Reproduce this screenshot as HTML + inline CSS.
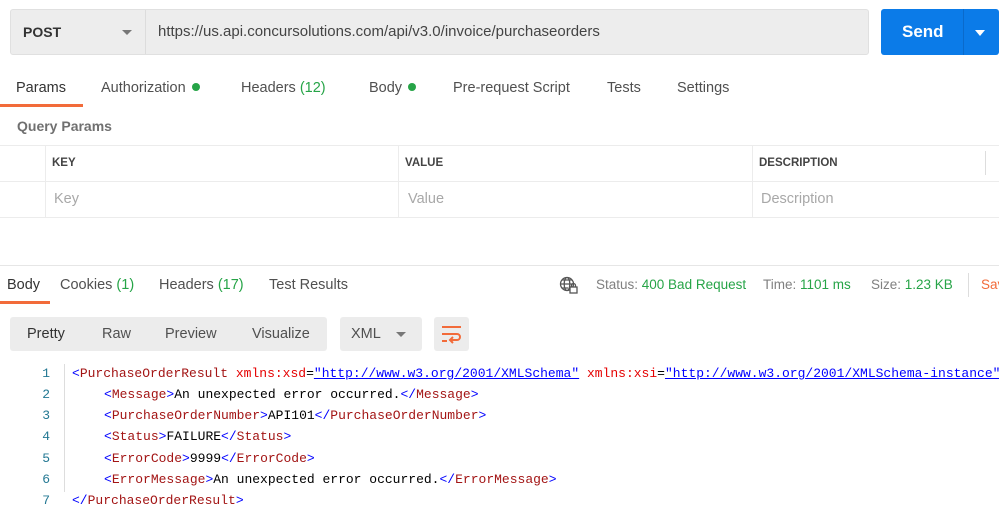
<!DOCTYPE html>
<html><head><meta charset="utf-8"><style>
*{margin:0;padding:0;box-sizing:border-box}
body{width:999px;height:532px;overflow:hidden;background:#fff;font-family:"Liberation Sans",sans-serif;font-size:14.5px;color:#505050;position:relative}
.a{position:absolute;white-space:nowrap}
.g{color:#26a447}
.dot{display:inline-block;width:8px;height:8px;border-radius:50%;background:#26a447;margin-left:6px;vertical-align:1px}
.code{font-family:"Liberation Mono",monospace;font-size:13px;color:#000}
.t{color:#0000ff}.n{color:#a31515}.at{color:#e50000}.s{color:#0000ff;text-decoration:underline}
.ln{position:absolute;left:30px;width:20px;text-align:right;font-family:"Liberation Mono",monospace;font-size:13px;color:#237893}
</style></head><body>
<div class="a" style="left:10px;top:9px;width:859px;height:46px;background:#ededed;border:1px solid #e0e0e0;border-radius:3px"></div>
<div class="a" style="left:145px;top:10px;width:1px;height:44px;background:#dcdcdc"></div>
<div class="a" style="left:23px;top:24px;color:#333;font-weight:bold;font-size:14px">POST</div>
<div class="a" style="left:122px;top:30px;border-left:5px solid transparent;border-right:5px solid transparent;border-top:5px solid #777"></div>
<div class="a" style="left:158px;top:23px;color:#444;font-size:15px">https://us.api.concursolutions.com/api/v3.0/invoice/purchaseorders</div>
<div class="a" style="left:881px;top:9px;width:118px;height:46px;background:#0b7be8;border-radius:3px"></div>
<div class="a" style="left:963px;top:9px;width:1px;height:46px;background:#0a6acb"></div>
<div class="a" style="left:902px;top:22px;color:#fff;font-weight:bold;font-size:17px">Send</div>
<div class="a" style="left:975px;top:30px;border-left:5px solid transparent;border-right:5px solid transparent;border-top:6px solid #fff"></div>

<div class="a" style="left:16px;top:80px;color:#333">Params</div>
<div class="a" style="left:0;top:104px;width:83px;height:3px;background:#f26b3a"></div>
<div class="a" style="left:101px;top:80px">Authorization<span class="dot"></span></div>
<div class="a" style="left:241px;top:80px">Headers <span class="g">(12)</span></div>
<div class="a" style="left:369px;top:80px">Body<span class="dot"></span></div>
<div class="a" style="left:453px;top:80px">Pre-request Script</div>
<div class="a" style="left:607px;top:80px">Tests</div>
<div class="a" style="left:677px;top:80px">Settings</div>
<div class="a" style="left:17px;top:118px;color:#707070;font-weight:bold;font-size:14px">Query Params</div>

<div class="a" style="left:0;top:145px;width:999px;height:1px;background:#ececec"></div>
<div class="a" style="left:0;top:181px;width:999px;height:1px;background:#ececec"></div>
<div class="a" style="left:0;top:217px;width:999px;height:1px;background:#ececec"></div>
<div class="a" style="left:45px;top:145px;width:1px;height:72px;background:#ececec"></div>
<div class="a" style="left:398px;top:145px;width:1px;height:72px;background:#ececec"></div>
<div class="a" style="left:752px;top:145px;width:1px;height:72px;background:#ececec"></div>
<div class="a" style="left:985px;top:151px;width:1px;height:24px;background:#ddd"></div>
<div class="a" style="left:52px;top:157px;font-size:11.5px;font-weight:bold;color:#444">KEY</div>
<div class="a" style="left:405px;top:157px;font-size:11.5px;font-weight:bold;color:#444">VALUE</div>
<div class="a" style="left:759px;top:157px;font-size:11.5px;font-weight:bold;color:#444">DESCRIPTION</div>
<div class="a" style="left:54px;top:191px;color:#a8a8a8">Key</div>
<div class="a" style="left:408px;top:191px;color:#a8a8a8">Value</div>
<div class="a" style="left:761px;top:191px;color:#a8a8a8">Description</div>

<div class="a" style="left:0;top:265px;width:999px;height:1px;background:#e6e6e6"></div>
<div class="a" style="left:7px;top:277px;color:#333">Body</div>
<div class="a" style="left:0;top:301px;width:50px;height:3px;background:#f26b3a"></div>
<div class="a" style="left:60px;top:277px">Cookies <span class="g">(1)</span></div>
<div class="a" style="left:159px;top:277px">Headers <span class="g">(17)</span></div>
<div class="a" style="left:269px;top:277px">Test Results</div>
<svg class="a" style="left:559px;top:276px" width="20" height="18" viewBox="0 0 20 18" fill="none" stroke="#555" stroke-width="1.3"><circle cx="8" cy="8" r="6.5"/><ellipse cx="8" cy="8" rx="2.8" ry="6.5"/><path d="M1.5 8h13M3 4h10M3 12h6"/><rect x="11" y="11" width="7" height="6" fill="#fff"/><path d="M12.5 11v-1.5a2 2 0 0 1 4 0V11"/></svg>
<div class="a" style="left:596px;top:277px;font-size:13.5px;color:#808080">Status: <span class="g">400 Bad Request</span></div>
<div class="a" style="left:763px;top:277px;font-size:13.5px;color:#808080">Time: <span class="g">1101 ms</span></div>
<div class="a" style="left:871px;top:277px;font-size:13.5px;color:#808080">Size: <span class="g">1.23 KB</span></div>
<div class="a" style="left:968px;top:273px;width:1px;height:24px;background:#ddd"></div>
<div class="a" style="left:981px;top:277px;font-size:13.5px;color:#f26b3a">Save</div>

<div class="a" style="left:10px;top:317px;width:317px;height:34px;background:#ececec;border-radius:3px"></div>
<div class="a" style="left:27px;top:326px;color:#333">Pretty</div>
<div class="a" style="left:102px;top:326px">Raw</div>
<div class="a" style="left:165px;top:326px">Preview</div>
<div class="a" style="left:252px;top:326px">Visualize</div>
<div class="a" style="left:340px;top:317px;width:82px;height:34px;background:#ececec;border-radius:3px"></div>
<div class="a" style="left:351px;top:326px">XML</div>
<div class="a" style="left:396px;top:332px;border-left:5px solid transparent;border-right:5px solid transparent;border-top:5px solid #777"></div>
<div class="a" style="left:434px;top:317px;width:35px;height:34px;background:#ececec;border-radius:3px"></div>
<svg class="a" style="left:441px;top:324px" width="21" height="20" viewBox="0 0 21 20" fill="none" stroke="#f26b3a" stroke-width="2"><path d="M1 3h19M1 10h15a3 3 0 0 1 0 6h-6M12 13l-3 3 3 3M1 17h5"/></svg>

<div class="a" style="left:64px;top:364px;width:1px;height:128px;background:#ddd"></div>
<div class="ln" style="top:366px">1</div><div class="ln" style="top:387px">2</div><div class="ln" style="top:408px">3</div><div class="ln" style="top:429px">4</div><div class="ln" style="top:451px">5</div><div class="ln" style="top:472px">6</div><div class="ln" style="top:493px">7</div>
<div class="a code" style="left:72px;top:366px"><span class="t">&lt;</span><span class="n">PurchaseOrderResult</span> <span class="at">xmlns:xsd</span>=<span class="s">"http://www.w3.org/2001/XMLSchema"</span> <span class="at">xmlns:xsi</span>=<span class="s">"http://www.w3.org/2001/XMLSchema-instance"</span></div>
<div class="a code" style="left:104px;top:387px"><span class="t">&lt;</span><span class="n">Message</span><span class="t">&gt;</span>An unexpected error occurred.<span class="t">&lt;/</span><span class="n">Message</span><span class="t">&gt;</span></div>
<div class="a code" style="left:104px;top:408px"><span class="t">&lt;</span><span class="n">PurchaseOrderNumber</span><span class="t">&gt;</span>API101<span class="t">&lt;/</span><span class="n">PurchaseOrderNumber</span><span class="t">&gt;</span></div>
<div class="a code" style="left:104px;top:429px"><span class="t">&lt;</span><span class="n">Status</span><span class="t">&gt;</span>FAILURE<span class="t">&lt;/</span><span class="n">Status</span><span class="t">&gt;</span></div>
<div class="a code" style="left:104px;top:451px"><span class="t">&lt;</span><span class="n">ErrorCode</span><span class="t">&gt;</span>9999<span class="t">&lt;/</span><span class="n">ErrorCode</span><span class="t">&gt;</span></div>
<div class="a code" style="left:104px;top:472px"><span class="t">&lt;</span><span class="n">ErrorMessage</span><span class="t">&gt;</span>An unexpected error occurred.<span class="t">&lt;/</span><span class="n">ErrorMessage</span><span class="t">&gt;</span></div>
<div class="a code" style="left:72px;top:493px"><span class="t">&lt;/</span><span class="n">PurchaseOrderResult</span><span class="t">&gt;</span></div>
</body></html>
